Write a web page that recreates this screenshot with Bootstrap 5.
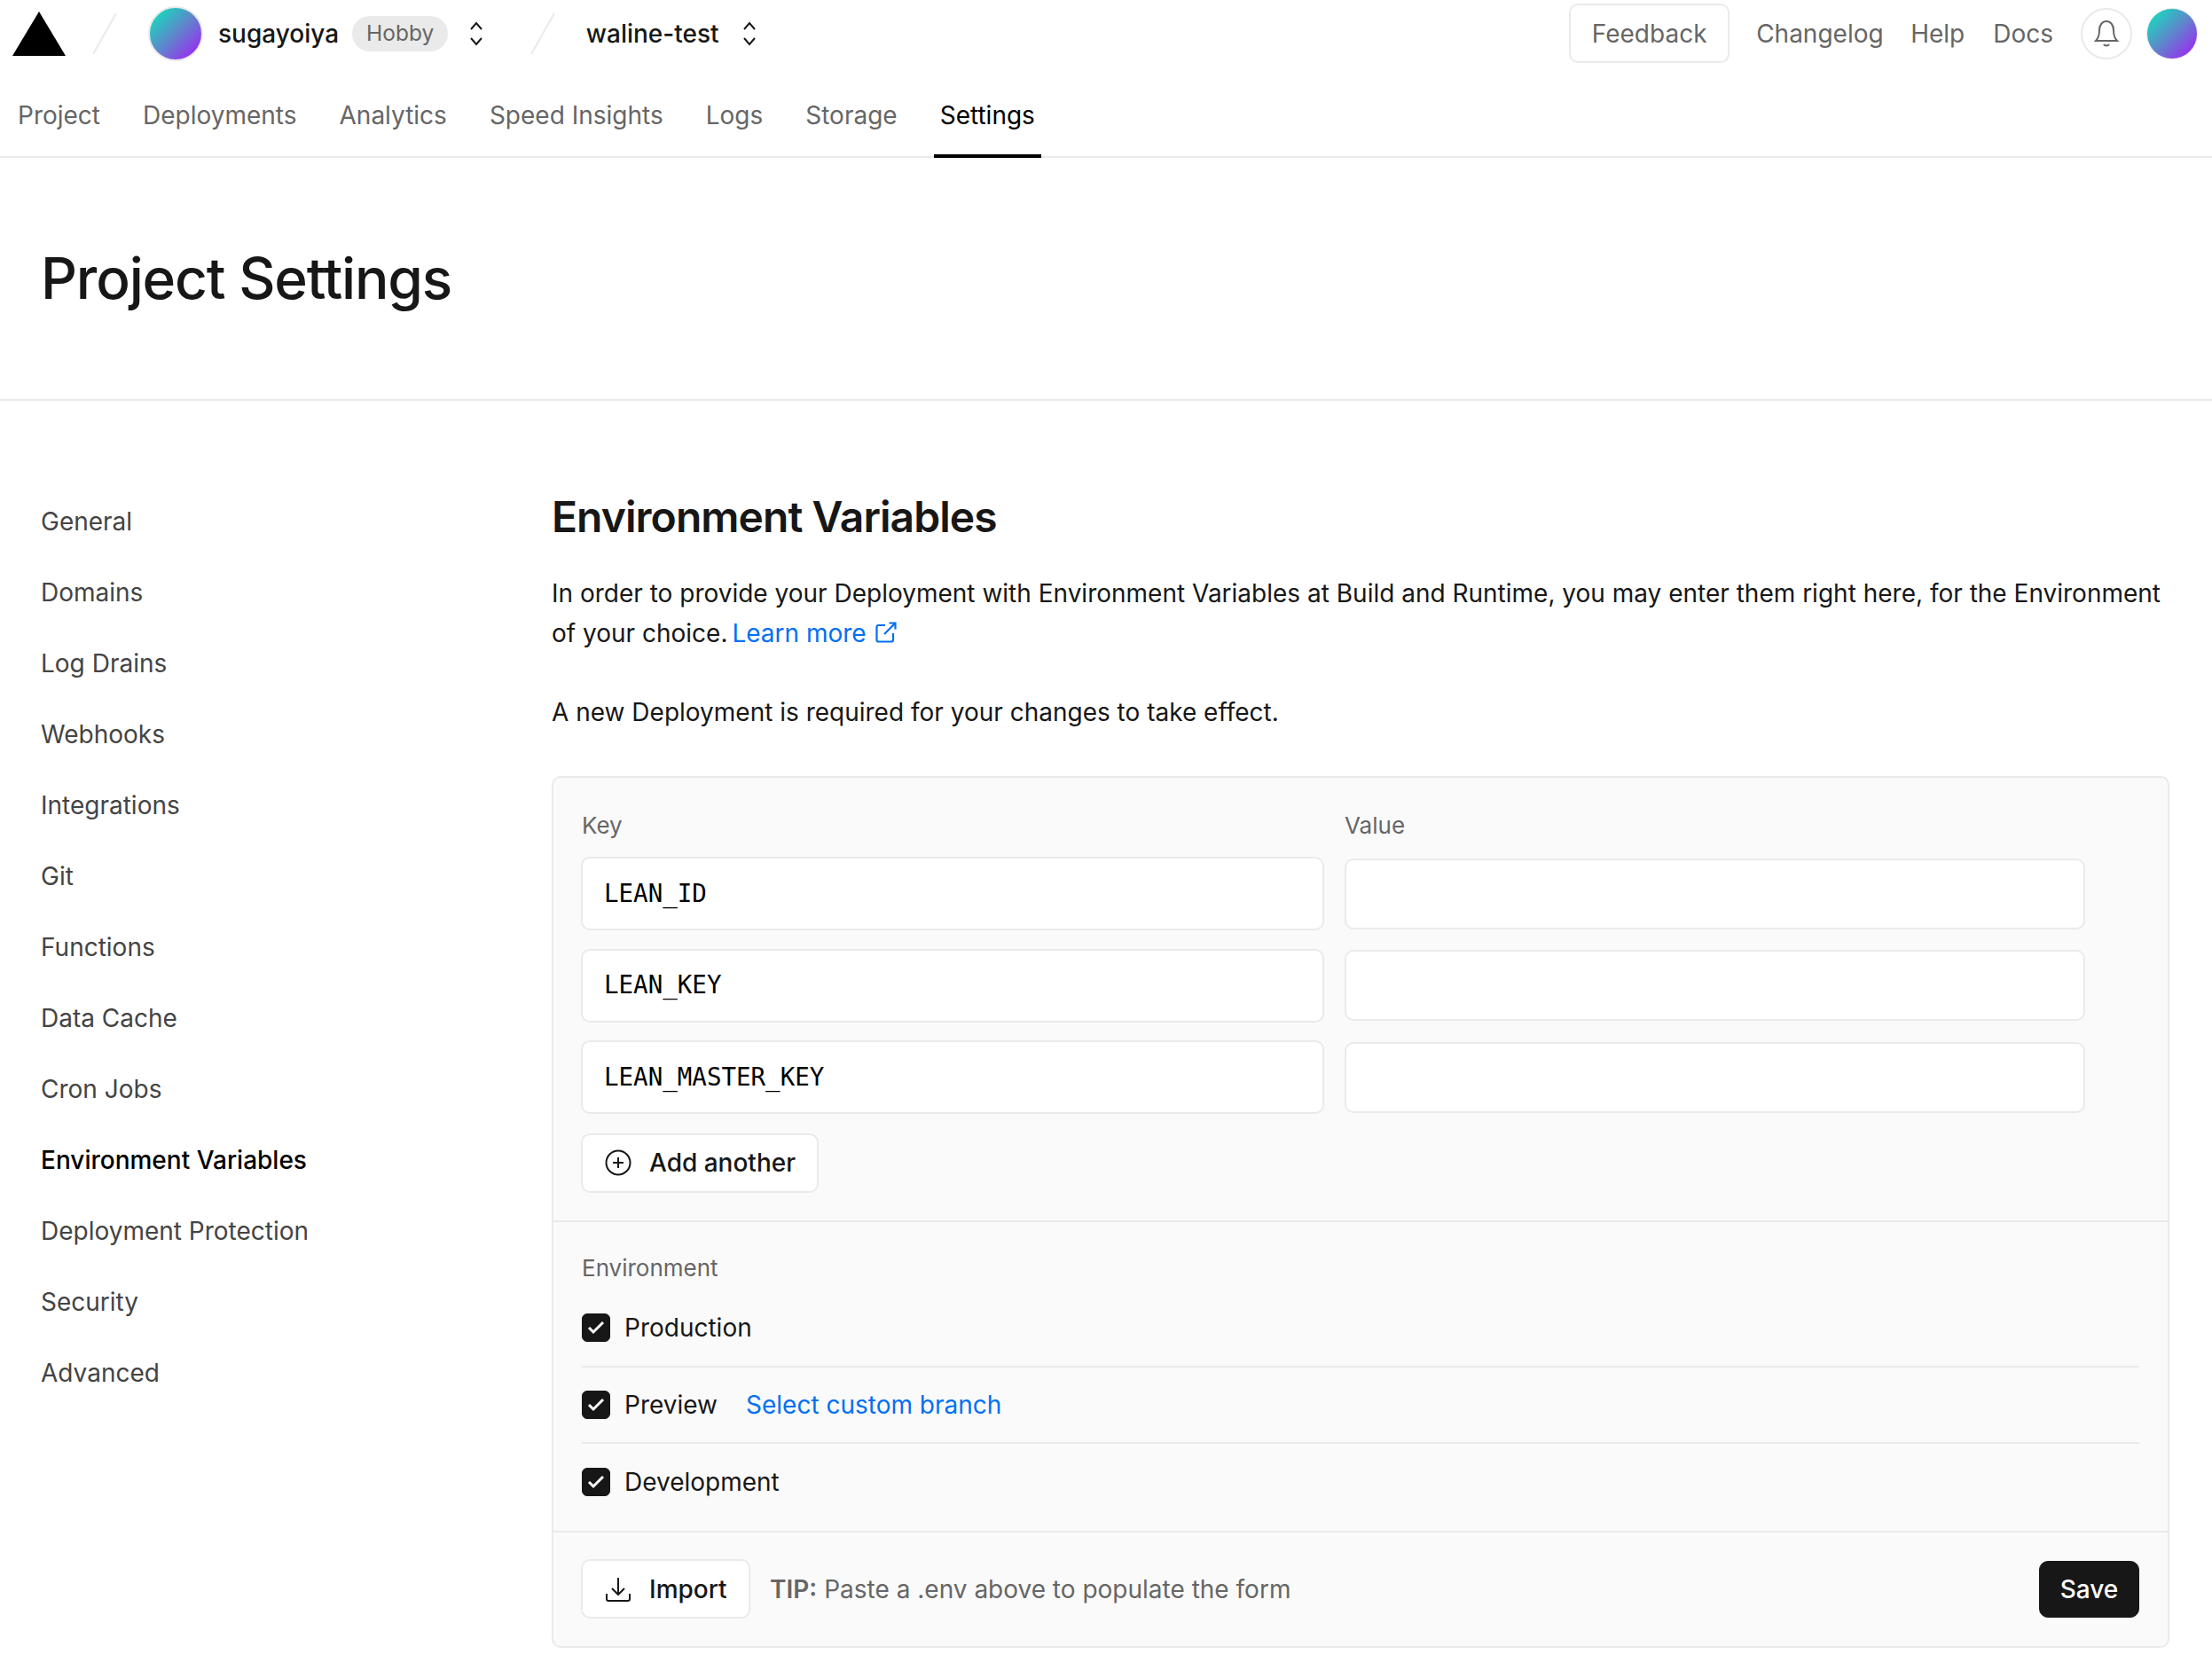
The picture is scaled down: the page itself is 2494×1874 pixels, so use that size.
<!DOCTYPE html>
<html lang="en">
<head>
  <meta charset="UTF-8" />
  <title>Project Settings</title>
  <link href="https://cdn.jsdelivr.net/npm/bootstrap@5.3.0/dist/css/bootstrap.min.css" rel="stylesheet" />
  <style>
    body { font-family: Inter, "Liberation Sans", sans-serif; font-size: 28px; color: #171717; background: #fff; }
    a { text-decoration: none; }
    .top-row { height: 75px; padding: 0 16px 0 14px; }
    .logo-mark { width: 60px; height: 50px; display: block; flex: none; }
    .slash { width: 28px; height: 48px; display: block; flex: none; }
    .slash line { stroke: #eaeaea; stroke-width: 2; }
    .slash-first { margin-left: 30px; }
    .slash-second { margin-left: 53px; }
    .avatar-round { width: 62px; height: 62px; flex: none; border-radius: 50%; border: 2px solid #eaeaea; background: linear-gradient(135deg, #18d9bd 10%, #5f86cc 50%, #9a2cf0 90%); }
    .avatar-team { margin: 0 17px 0 35px; }
    .avatar-small { width: 58px; height: 58px; margin-left: 16px; border-width: 1px; }
    .team-name { font-weight: 500; }
    .project-name { margin-left: 35px; }
    .plan-pill { background: #eaeaea; color: #666; font-size: 24.5px; height: 40px; border-radius: 20px; padding: 0 16px; margin-left: 15px; display: flex; align-items: center; }
    .chev { width: 16px; height: 28px; display: block; flex: none; margin-left: 23.5px; }
    .chev-project { margin-left: 26px; }
    .feedback-btn { width: 181px; height: 67px; border: 2px solid #eaeaea; border-radius: 10px; color: #666; display: flex; align-items: center; justify-content: center; }
    .top-link { color: #666; margin-left: 32px; }
    .top-link-first { margin-left: 30px; }
    .top-link-help { margin-left: 30.5px; }
    .bell-btn { width: 58px; height: 58px; margin-left: 31px; border: 2px solid #eaeaea; border-radius: 50%; display: flex; align-items: center; justify-content: center; }
    .tab-row { height: 103px; border-bottom: 2px solid #eaeaea; padding-left: 13px; gap: 34px; }
    .tab-item { color: #666; height: 103px; padding: 10px 7px 0; display: flex; align-items: center; border-bottom: 4px solid transparent; margin-bottom: -2px; }
    .tab-item.on { color: #000; border-bottom-color: #000; }
    .title-band { height: 274px; border-bottom: 2px solid #eaeaea; padding-left: 46px; display: flex; align-items: center; }
    .title-band h1 { font-size: 64px; font-weight: 500; letter-spacing: -1.2px; margin: 0; }
    .page-body { padding: 96px 48px 18px 46px; }
    .side-col { width: 576px; flex: none; }
    .side-link { display: flex; align-items: center; height: 80px; color: #444; }
    .side-link.on { color: #000; font-weight: 500; }
    .main-col { flex: 1; min-width: 0; margin-top: -1px; }
    .main-col h2 { font-size: 48px; font-weight: 600; letter-spacing: -0.95px; line-height: 72px; margin: 0 0 28px; }
    .intro { line-height: 45px; margin-bottom: 44px; }
    .intro-last { margin-bottom: 49px; }
    .blue-link { color: #0070f3; }
    .learn-link { margin-left: -3px; }
    .branch-link { margin-left: 32px; }
    .ext-icon { margin-left: 2px; vertical-align: -1px; }
    .env-panel { background: #fafafa; border: 2px solid #eaeaea; border-radius: 10px; }
    .panel-keys { padding: 34px 31px 31.5px; border-bottom: 2px solid #eaeaea; }
    .field-label { font-size: 26px; line-height: 40px; color: #666; }
    .field-grid { display: grid; grid-template-columns: 838px 835px; column-gap: 23px; row-gap: 20.5px; }
    .label-grid { margin-bottom: 15px; }
    .label-grid .field-label:first-child { padding-left: 1px; }
    .var-input.form-control { height: 83px; border: 2px solid #eaeaea; border-radius: 10px; padding: 0 24px; background: #fff; color: #000; font-family: "DejaVu Sans Mono", monospace; font-size: 27.5px; box-shadow: none; display: flex; align-items: center; }
    .var-input.val { height: 80px; align-self: center; }
    .white-btn { background: #fff; border: 2px solid #eaeaea; border-radius: 10px; height: 67px; padding: 0 24px 0 25px; color: #171717; font-size: 28px; font-weight: 500; display: inline-flex; align-items: center; gap: 20px; }
    .white-btn:hover { background: #fff; border-color: #eaeaea; }
    .add-btn { margin-top: 21.5px; }
    .panel-envs { padding: 32px 32px 11px; border-bottom: 2px solid #eaeaea; }
    .env-label { margin-bottom: 5px; }
    .env-row { height: 86.5px; display: flex; align-items: center; border-bottom: 2px solid #eaeaea; }
    .env-row:last-child { border-bottom: 0; }
    .env-check.form-check-input { width: 32px; height: 32px; margin: 0 16px 0 0; border-radius: 6px; background-color: #171717; border-color: #171717; background-size: 32px; box-shadow: none; flex: none;
      background-image: url("data:image/svg+xml,%3csvg xmlns='http://www.w3.org/2000/svg' viewBox='0 0 32 32'%3e%3cpath fill='none' stroke='%23fff' stroke-width='3' d='M8 16l5 5 11-11'/%3e%3c/svg%3e"); }
    .panel-foot { height: 128px; padding: 0 32px 0 31px; display: flex; align-items: center; }
    .tip-text { color: #666; margin-left: 22.5px; }
    .save-btn.btn { width: 113px; height: 64px; padding: 0; background: #171717; border-color: #171717; color: #fff; font-size: 28px; font-weight: 500; border-radius: 10px; margin-left: auto; }
  </style>
</head>
<body>
  <header>
    <div class="top-row d-flex align-items-center">
      <svg class="logo-mark" viewBox="0 0 60 50"><polygon points="30,0 60,50 0,50" fill="#000"/></svg>
      <svg class="slash slash-first" viewBox="0 0 28 48"><line x1="27" y1="1" x2="1" y2="47"/></svg>
      <div class="avatar-round avatar-team"></div>
      <span class="team-name">sugayoiya</span>
      <span class="plan-pill">Hobby</span>
      <svg class="chev" viewBox="0 0 16 28"><path d="M2 9 8 2l6 7M2 19l6 7 6-7" fill="none" stroke="#171717" stroke-width="2"/></svg>
      <svg class="slash slash-second" viewBox="0 0 28 48"><line x1="27" y1="1" x2="1" y2="47"/></svg>
      <span class="team-name project-name">waline-test</span>
      <svg class="chev chev-project" viewBox="0 0 16 28"><path d="M2 9 8 2l6 7M2 19l6 7 6-7" fill="none" stroke="#171717" stroke-width="2"/></svg>
      <div class="ms-auto d-flex align-items-center">
        <a class="feedback-btn" href="#">Feedback</a>
        <a class="top-link top-link-first" href="#">Changelog</a>
        <a class="top-link top-link-help" href="#">Help</a>
        <a class="top-link" href="#">Docs</a>
        <span class="bell-btn">
          <svg width="28" height="31" viewBox="0 0 28 31" fill="none" stroke="#666" stroke-width="2"><path d="M2 24c3-3 4-6 4-12 0-6 3.500-10 8-10s8 4 8 10c0 6 1 9 4 12z"/><path d="M11 28c1 2 5 2 6 0"/></svg>
        </span>
        <div class="avatar-round avatar-small"></div>
      </div>
    </div>
    <nav class="tab-row d-flex">
      <a class="tab-item" href="#">Project</a>
      <a class="tab-item" href="#">Deployments</a>
      <a class="tab-item" href="#">Analytics</a>
      <a class="tab-item" href="#">Speed Insights</a>
      <a class="tab-item" href="#">Logs</a>
      <a class="tab-item" href="#">Storage</a>
      <a class="tab-item on" href="#">Settings</a>
    </nav>
  </header>

  <div class="title-band"><h1>Project Settings</h1></div>

  <div class="page-body d-flex">
    <aside class="side-col">
      <a class="side-link" href="#">General</a>
      <a class="side-link" href="#">Domains</a>
      <a class="side-link" href="#">Log Drains</a>
      <a class="side-link" href="#">Webhooks</a>
      <a class="side-link" href="#">Integrations</a>
      <a class="side-link" href="#">Git</a>
      <a class="side-link" href="#">Functions</a>
      <a class="side-link" href="#">Data Cache</a>
      <a class="side-link" href="#">Cron Jobs</a>
      <a class="side-link on" href="#">Environment Variables</a>
      <a class="side-link" href="#">Deployment Protection</a>
      <a class="side-link" href="#">Security</a>
      <a class="side-link" href="#">Advanced</a>
    </aside>

    <main class="main-col">
      <h2>Environment Variables</h2>
      <p class="intro">In order to provide your Deployment with Environment Variables at Build and Runtime, you may enter them right here, for the Environment of your choice. <a class="blue-link learn-link" href="#">Learn more
        <svg class="ext-icon" width="24" height="24" viewBox="0 0 24 24" fill="none" stroke="#0070f3" stroke-width="2.200"><path d="M11 4H3.500a2 2 0 0 0-2 2v14.500a2 2 0 0 0 2 2H18a2 2 0 0 0 2-2V13M10 14 22.500 1.500M15.500 1.500h7v7"/></svg></a></p>
      <p class="intro intro-last">A new Deployment is required for your changes to take effect.</p>

      <section class="env-panel">
        <div class="panel-keys">
          <div class="field-grid label-grid"><div class="field-label">Key</div><div class="field-label">Value</div></div>
          <div class="field-grid">
            <div class="form-control var-input">LEAN_ID</div>
            <input class="form-control var-input val" />
            <div class="form-control var-input">LEAN_KEY</div>
            <input class="form-control var-input val" />
            <div class="form-control var-input">LEAN_MASTER_KEY</div>
            <input class="form-control var-input val" />
          </div>
          <button class="btn white-btn add-btn">
            <svg width="30" height="30" viewBox="0 0 30 30" fill="none" stroke="#171717" stroke-width="2"><circle cx="15" cy="15" r="13.500"/><path d="M15 9v12M9 15h12"/></svg>
            Add another
          </button>
        </div>

        <div class="panel-envs">
          <div class="field-label env-label">Environment</div>
          <div class="env-row"><input class="form-check-input env-check" type="checkbox" checked /><span>Production</span></div>
          <div class="env-row"><input class="form-check-input env-check" type="checkbox" checked /><span>Preview</span><a class="blue-link branch-link" href="#">Select custom branch</a></div>
          <div class="env-row"><input class="form-check-input env-check" type="checkbox" checked /><span>Development</span></div>
        </div>

        <div class="panel-foot">
          <button class="btn white-btn">
            <svg width="30" height="30" viewBox="0 0 30 30" fill="none" stroke="#171717" stroke-width="2"><path d="M15 2v18M8 14l7 7 7-7M2 20v6a2 2 0 0 0 2 2h22a2 2 0 0 0 2-2v-6"/></svg>
            Import
          </button>
          <span class="tip-text"><b class="fw-semibold">TIP:</b> Paste a .env above to populate the form</span>
          <button class="btn save-btn">Save</button>
        </div>
      </section>
    </main>
  </div>
</body>
</html>
